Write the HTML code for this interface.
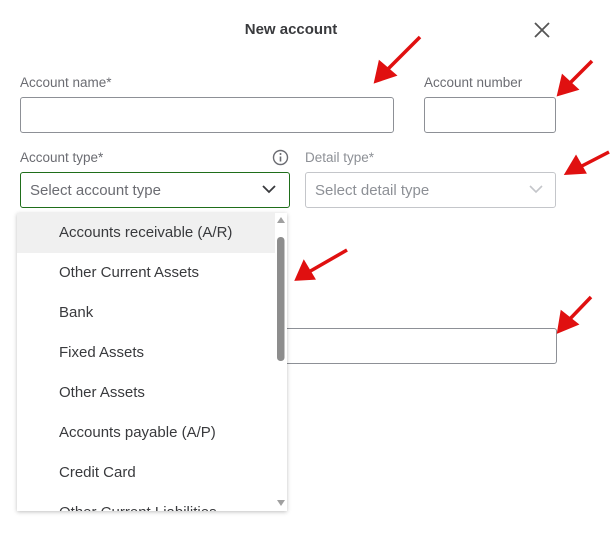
<!DOCTYPE html>
<html><head><style>
body{margin:0;width:610px;height:553px;background:#fff;font-family:"Liberation Sans",sans-serif;position:relative;overflow:hidden}
.a{position:absolute}
.lbl{font-size:13.5px;color:#6b6c72}
.in{border:1px solid #8d9096;border-radius:3px;background:#fff;box-sizing:border-box}
.it{position:absolute;left:42px;font-size:15px;color:#393a3d}
</style></head><body>
<div class="a" style="left:0;width:582px;top:21px;text-align:center;font-size:15px;font-weight:bold;color:#393a3d">New account</div>
<svg class="a" style="left:533px;top:21px" width="18" height="18"><path d="M2 2L16 16M16 2L2 16" stroke="#555" stroke-width="1.8"/></svg>
<div class="a lbl" style="left:20px;top:75px">Account name*</div>
<div class="a lbl" style="left:424px;top:75px">Account number</div>
<div class="a in" style="left:20px;top:97px;width:374px;height:36px"></div>
<div class="a in" style="left:424px;top:97px;width:132px;height:36px"></div>
<div class="a lbl" style="left:20px;top:150px">Account type*</div>
<svg class="a" style="left:272px;top:149px" width="17" height="17"><circle cx="8.5" cy="8.5" r="7" fill="none" stroke="#6b6c72" stroke-width="1.4"/><path d="M8.5 7.5V12.5" stroke="#6b6c72" stroke-width="1.6"/><circle cx="8.5" cy="5" r="1" fill="#6b6c72"/></svg>
<div class="a lbl" style="left:305px;top:150px;color:#8d9096">Detail type*</div>
<div class="a in" style="left:20px;top:172px;width:270px;height:36px;border:1.5px solid #1f6e1a"></div>
<div class="a" style="left:30px;top:182px;font-size:15px;color:#6b6c72">Select account type</div>
<svg class="a" style="left:261px;top:183px" width="16" height="12"><path d="M2 3L8 9L14 3" fill="none" stroke="#393a3d" stroke-width="1.8"/></svg>
<div class="a in" style="left:305px;top:172px;width:251px;height:36px;border-color:#c4c6ca"></div>
<div class="a" style="left:315px;top:182px;font-size:15px;color:#8d9096">Select detail type</div>
<svg class="a" style="left:528px;top:183px" width="16" height="12"><path d="M2 3L8 9L14 3" fill="none" stroke="#c4c6ca" stroke-width="1.6"/></svg>
<div class="a in" style="left:280px;top:328px;width:277px;height:36px"></div>
<div class="a" style="left:17px;top:213px;width:270px;height:298px;background:#fff;box-shadow:0 1px 4px rgba(0,0,0,.25);overflow:hidden">
<div class="a" style="left:0;top:0;width:258px;height:40px;background:#f0f0f0"></div>
<div class="it" style="top:11px">Accounts receivable (A/R)</div>
<div class="it" style="top:51px">Other Current Assets</div>
<div class="it" style="top:91px">Bank</div>
<div class="it" style="top:131px">Fixed Assets</div>
<div class="it" style="top:171px">Other Assets</div>
<div class="it" style="top:211px">Accounts payable (A/P)</div>
<div class="it" style="top:251px">Credit Card</div>
<div class="it" style="top:291px">Other Current Liabilities</div>
<svg class="a" style="left:258px;top:0" width="12" height="298"><path d="M2 10L6 4L10 10Z" fill="#a0a0a0"/><rect x="2" y="24" width="7.5" height="124" rx="3.5" fill="#8d8d8d"/><path d="M2 287L6 293L10 287Z" fill="#a0a0a0"/></svg>
</div>
<svg class="a" style="left:0;top:0" width="610" height="553">
<g stroke="#e01010" stroke-width="3.5" fill="#e01010">
<line x1="420" y1="37" x2="385" y2="72"/><path d="M376 81L380 63L394 75Z"/>
<line x1="592" y1="61" x2="567" y2="86"/><path d="M559 94L563 77L576 89Z"/>
<line x1="609" y1="152" x2="578" y2="168"/><path d="M567 173L576 158L584 172Z"/>
<line x1="347" y1="250" x2="307" y2="273"/><path d="M297 279L304 263L313 278Z"/>
<line x1="591" y1="297" x2="567" y2="322"/><path d="M559 331L562 313L576 324Z"/>
</g></svg>
</body></html>
